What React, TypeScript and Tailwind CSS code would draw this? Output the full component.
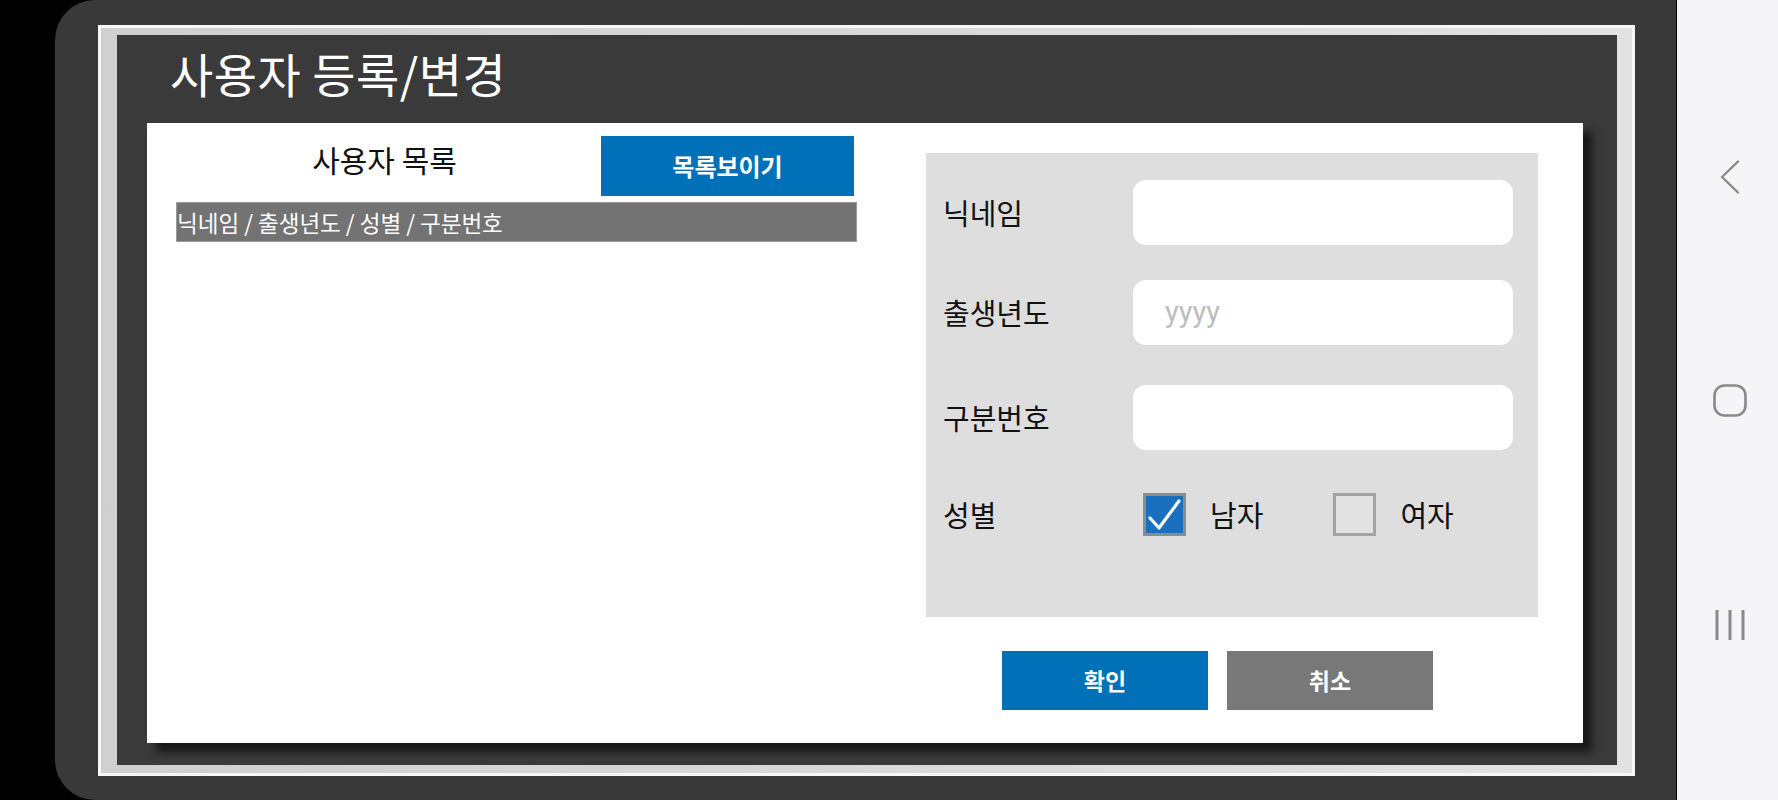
const fieldRows = [
  { label: "닉네임", placeholder: "", mt: "mt-[27px]" },
  { label: "출생년도", placeholder: "yyyy", mt: "mt-[35px]" },
  { label: "구분번호", placeholder: "", mt: "mt-[40px]" },
];

function CheckBox({ checked }: { checked: boolean }) {
  if (checked) {
    return (
      <div className="flex h-[43px] w-[43px] items-center justify-center border-[3px] border-[#8c8c8c] bg-[#1a70bf]">
        <svg width="37" height="37" viewBox="0 0 37 37" fill="none">
          <polyline points="4,22 13,32 33,5" stroke="white" strokeWidth="3.2" strokeLinecap="round" strokeLinejoin="round" />
        </svg>
      </div>
    );
  }
  return <div className="h-[43px] w-[43px] border-[3px] border-[#a3a3a3] bg-[#e2e2e2]" />;
}

function NavBar() {
  return (
    <div className="flex w-[101px] flex-col items-center bg-[#f5f5f7] pl-[4px]">
      <svg className="mt-[160px]" width="20" height="34" viewBox="0 0 20 34" fill="none">
        <polyline points="18,1.5 2,17 18,32.5" stroke="#8a8a8a" strokeWidth="2.4" strokeLinecap="round" strokeLinejoin="round" />
      </svg>
      <svg className="mt-[190px]" width="34" height="33" viewBox="0 0 34 33" fill="none">
        <rect x="1.5" y="1.5" width="31" height="30" rx="10" stroke="#8a8a8a" strokeWidth="2.6" />
      </svg>
      <svg className="mt-[192px]" width="32" height="32" viewBox="0 0 32 32" fill="none">
        <line x1="3" y1="1" x2="3" y2="31" stroke="#8a8a8a" strokeWidth="3" />
        <line x1="16" y1="1" x2="16" y2="31" stroke="#8a8a8a" strokeWidth="3" />
        <line x1="29" y1="1" x2="29" y2="31" stroke="#8a8a8a" strokeWidth="3" />
      </svg>
    </div>
  );
}

export default function App() {
  return (
    <div className="flex h-[800px] w-[1778px] bg-black font-['Noto_Sans_CJK_KR','Noto_Sans',sans-serif]">
      {/* device screen */}
      <div className="ml-[55px] flex flex-1 rounded-l-[40px] border-r border-black bg-[#393939] pb-[24px] pl-[43px] pr-[41px] pt-[25px]">
        <div className="flex flex-1 border-[3px] border-[#f7f7f7] bg-gradient-to-r from-[#cfcfcf] to-[#e2e2e2] pb-[8px] pl-[16px] pr-[15px] pt-[7px]">
          <div className="flex flex-1 flex-col bg-[#3a3a3a]">
            <div className="h-[88px] pl-[53px] pt-[14px] text-[47px] leading-none tracking-[0.5px] text-white">사용자 등록/변경</div>

            {/* card */}
            <div className="mb-[22px] ml-[30px] mr-[34px] flex flex-1 bg-white shadow-[9px_9px_8px_rgba(0,0,0,0.6)]">
              {/* user list */}
              <div className="w-[710px] pl-[29px] pt-[13px]">
                <div className="flex h-[60px] items-start">
                  <div className="flex-1 pr-[8px] pt-[8px] text-center text-[30px] leading-none text-[#111]">사용자 목록</div>
                  <button className="mr-[3px] flex h-[60px] w-[253px] items-center justify-center bg-[#0070b8] text-[24px] font-bold text-white">
                    목록보이기
                  </button>
                </div>
                <div className="mt-[6px] flex h-[40px] w-[681px] items-center border border-[#9a9a9a] bg-[#737373] text-[22.5px] leading-none text-white">
                  닉네임 / 출생년도 / 성별 / 구분번호
                </div>
              </div>

              {/* form */}
              <div className="ml-[69px] flex flex-col pt-[30px]">
                <div className="flex h-[464px] w-[612px] flex-col bg-[#dedede] pl-[17px]">
                  {fieldRows.map((row) => (
                    <div key={row.label} className={`${row.mt} flex h-[65px] items-center`}>
                      <div className="w-[190px] text-[29px] leading-none text-[#111]">{row.label}</div>
                      <div className="flex h-[65px] w-[380px] items-center rounded-[13px] bg-white pl-[32px] font-['Roboto',sans-serif] text-[29px] text-[#bdbdbd]">
                        {row.placeholder}
                      </div>
                    </div>
                  ))}
                  <div className="mt-[43px] flex h-[43px] items-center">
                    <div className="w-[200px] text-[29px] leading-none text-[#111]">성별</div>
                    <CheckBox checked />
                    <div className="ml-[24px] text-[29px] leading-none text-[#111]">남자</div>
                    <div className="ml-[70px]">
                      <CheckBox checked={false} />
                    </div>
                    <div className="ml-[24px] text-[29px] leading-none text-[#111]">여자</div>
                  </div>
                </div>

                <div className="ml-[76px] mt-[34px] flex gap-[19px]">
                  <button className="flex h-[59px] w-[206px] items-center justify-center bg-[#0070b8] text-[23px] font-bold text-white">확인</button>
                  <button className="flex h-[59px] w-[206px] items-center justify-center bg-[#787878] text-[23px] font-bold text-white">취소</button>
                </div>
              </div>
            </div>
          </div>
        </div>
      </div>

      <NavBar />
    </div>
  );
}
